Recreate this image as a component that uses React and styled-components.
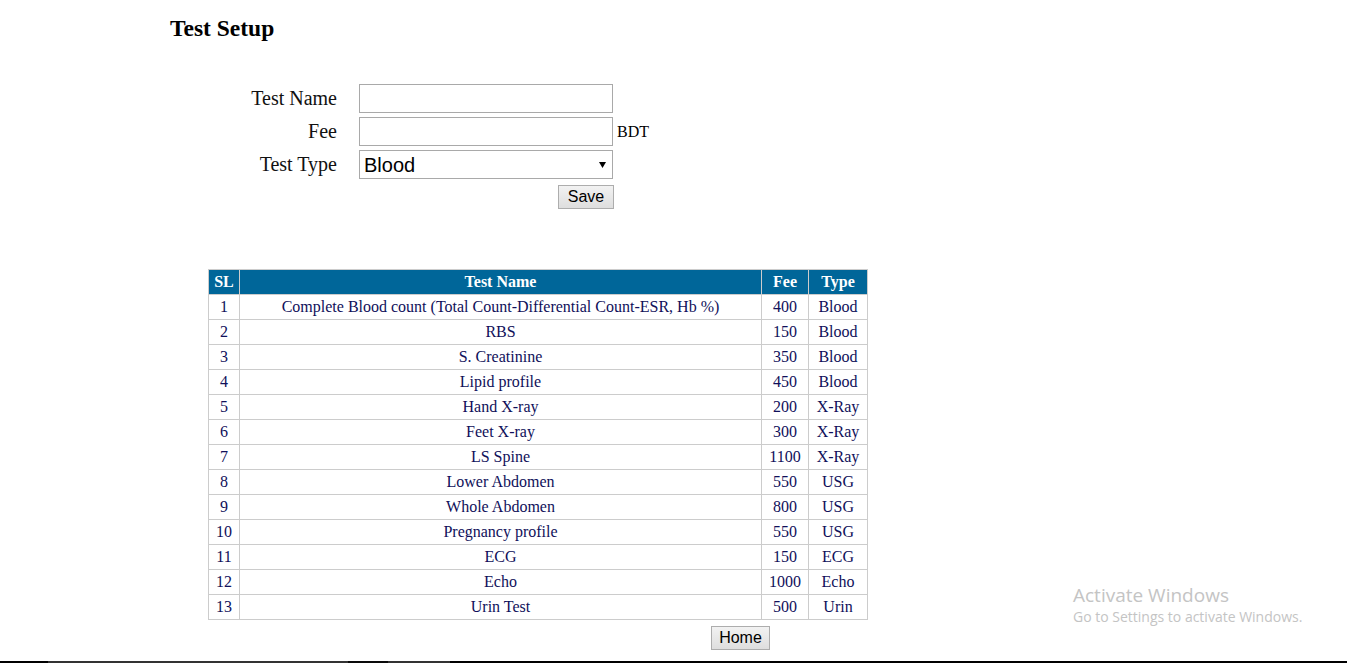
import React from 'react'
import styled, { createGlobalStyle } from 'styled-components'

const tests = [
    ['Complete Blood count (Total Count-Differential Count-ESR, Hb %)', 400, 'Blood'],
    ['RBS', 150, 'Blood'],
    ['S. Creatinine', 350, 'Blood'],
    ['Lipid profile', 450, 'Blood'],
    ['Hand X-ray', 200, 'X-Ray'],
    ['Feet X-ray', 300, 'X-Ray'],
    ['LS Spine', 1100, 'X-Ray'],
    ['Lower Abdomen', 550, 'USG'],
    ['Whole Abdomen', 800, 'USG'],
    ['Pregnancy profile', 550, 'USG'],
    ['ECG', 150, 'ECG'],
    ['Echo', 1000, 'Echo'],
    ['Urin Test', 500, 'Urin'],
]

function App() {
    return (
        <Page>
            <GlobalStyle />
            <Heading>Test Setup</Heading>
            <Form>
                <Label>Test Name</Label>
                <Field><TextInput type="text" /></Field>
                <Label>Fee</Label>
                <Field><TextInput type="text" /><Unit>BDT</Unit></Field>
                <Label>Test Type</Label>
                <Field>
                    <SelectWrap>
                        <Select defaultValue="Blood">
                            <option>Blood</option>
                            <option>X-Ray</option>
                            <option>USG</option>
                            <option>ECG</option>
                            <option>Echo</option>
                            <option>Urin</option>
                        </Select>
                        <Arrow viewBox="0 0 7 6"><path d="M0 0h7L3.5 6z" fill="#000" /></Arrow>
                    </SelectWrap>
                </Field>
                <span />
                <SaveRow><Button $w={56}>Save</Button></SaveRow>
            </Form>

            <Table>
                <colgroup>
                    <col style={{ width: 31 }} />
                    <col style={{ width: 522 }} />
                    <col style={{ width: 47 }} />
                    <col style={{ width: 59 }} />
                </colgroup>
                <thead>
                    <tr>
                        <Th>SL</Th>
                        <Th>Test Name</Th>
                        <Th>Fee</Th>
                        <Th>Type</Th>
                    </tr>
                </thead>
                <tbody>
                    {tests.map((t, i) => (
                        <tr key={i}>
                            <Td>{i + 1}</Td>
                            <Td>{t[0]}</Td>
                            <Td>{t[1]}</Td>
                            <Td>{t[2]}</Td>
                        </tr>
                    ))}
                </tbody>
            </Table>
            <HomeRow><Button $w={59}>Home</Button></HomeRow>

            <Watermark>
                <div className="title">Activate Windows</div>
                <div className="sub">Go to Settings to activate Windows.</div>
            </Watermark>
            <Taskbar>
                <TaskSeg $w={48} $c="#000" />
                <TaskSeg $w={300} $c="#333" />
                <TaskSeg $w={40} $c="#0a0a0a" />
                <TaskSeg $w={62} $c="#333" />
                <TaskSeg $grow $c="#000" />
            </Taskbar>
        </Page>
    )
}

export default App

const GlobalStyle = createGlobalStyle`
    html, body {
        margin: 0;
        padding: 0;
        background: #fff;
        height: 663px;
        overflow: hidden;
    }
`

const Page = styled.div`
    position: relative;
    height: 663px;
    font-family: "Liberation Serif", "Times New Roman", serif;
    color: #000;
    box-sizing: border-box;
    padding-top: 14px;
`

const Heading = styled.h2`
    margin: 0 0 0 170px;
    font-size: 23.5px;
    font-weight: bold;
    line-height: 28px;
`

const Form = styled.div`
    display: grid;
    grid-template-columns: 97px 254px;
    column-gap: 22px;
    row-gap: 4px;
    margin: 42px 0 0 240px;
    align-items: center;
`

const Label = styled.label`
    text-align: right;
    font-size: 20px;
    line-height: 29px;
    color: #111;
`

const Field = styled.div`
    display: flex;
    align-items: center;
    width: 254px;
    position: relative;
`

const TextInput = styled.input`
    width: 254px;
    height: 29px;
    box-sizing: border-box;
    border: 1px solid #a9a9a9;
    padding: 2px 4px;
    font-size: 16px;
    outline: none;
    flex-shrink: 0;
`

const Unit = styled.span`
    font-size: 16px;
    margin-left: 4px;
    white-space: nowrap;
`

const SelectWrap = styled.div`
    position: relative;
    width: 254px;
    height: 29px;
`

const Select = styled.select`
    appearance: none;
    width: 254px;
    height: 29px;
    box-sizing: border-box;
    border: 1px solid #a9a9a9;
    border-radius: 0;
    background: #fff;
    padding: 0 4px;
    font-family: "Liberation Sans", Arial, sans-serif;
    font-size: 20px;
    color: #000;
    outline: none;
`

const Arrow = styled.svg`
    position: absolute;
    right: 7px;
    top: 12px;
    width: 7px;
    height: 6px;
    pointer-events: none;
`

const SaveRow = styled.div`
    display: flex;
    justify-content: flex-end;
    margin-top: 2px;
    margin-right: -1px;
`

const Button = styled.button`
    font-family: "Liberation Sans", Arial, sans-serif;
    font-size: 16px;
    color: #000;
    width: ${p => p.$w}px;
    height: 24px;
    padding: 0;
    border: 1px solid #adadad;
    border-radius: 0;
    background: linear-gradient(#f2f2f2, #dedede);
    line-height: 22px;
`

const Table = styled.table`
    border-collapse: collapse;
    margin: 60px 0 0 208px;
    width: 660px;
    table-layout: fixed;
`

const Th = styled.th`
    background: #006699;
    color: #fff;
    font-size: 16px;
    font-weight: bold;
    height: 24px;
    padding: 0;
    border: 1px solid #ccc;
    line-height: 18px;
`

const Td = styled.td`
    color: #10105a;
    font-size: 16px;
    text-align: center;
    height: 24px;
    padding: 0;
    border: 1px solid #ccc;
    line-height: 18px;
    white-space: nowrap;
`

const HomeRow = styled.div`
    margin: 6px 0 0 711px;
`

const Watermark = styled.div`
    position: absolute;
    left: 1073px;
    top: 583px;
    font-family: "Open Sans", "Noto Sans", sans-serif;
    color: #c4c4c4;
    .title {
        font-size: 19px;
        line-height: 24px;
    }
    .sub {
        font-size: 14px;
        line-height: 20px;
    }
`

const Taskbar = styled.div`
    position: absolute;
    left: 0;
    right: 0;
    bottom: 0;
    height: 2px;
    display: flex;
`

const TaskSeg = styled.div`
    width: ${p => (p.$grow ? 'auto' : `${p.$w}px`)};
    flex: ${p => (p.$grow ? 1 : 'none')};
    background: ${p => p.$c};
`
